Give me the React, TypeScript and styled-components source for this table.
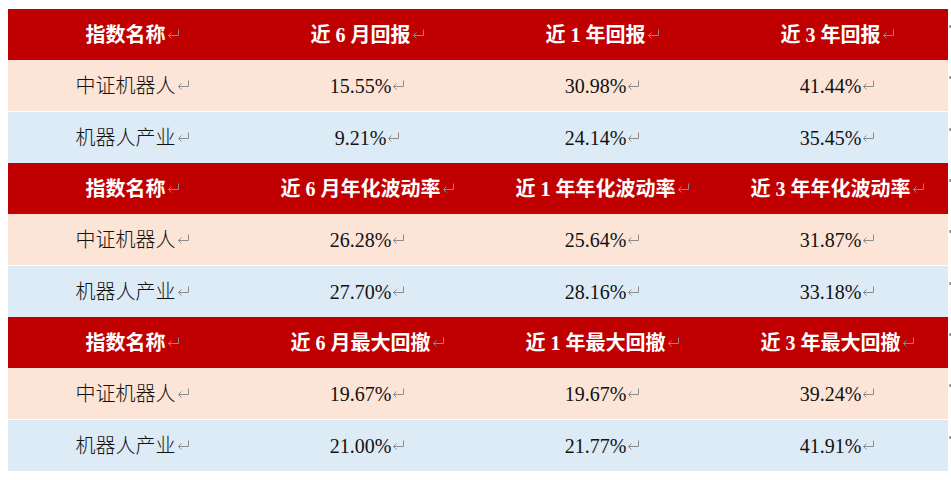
import React from "react";
import styled, { createGlobalStyle } from "styled-components";

const Global = createGlobalStyle`
  html, body { margin: 0; padding: 0; background: #ffffff; }
  body { font-family: "Liberation Serif", "Noto Sans CJK SC", serif; }
`;

const Page = styled.div`
  padding: 9px 0 0 8px;
  width: 951px;
  height: 480px;
  box-sizing: border-box;
  overflow: hidden;
`;

const Table = styled.div`
  display: flex;
  flex-direction: column;
  width: 943px;
`;

type Kind = "head" | "pink" | "blue";

const bg: Record<Kind, string> = {
  head: "#c00000",
  pink: "#fce4d6",
  blue: "#ddebf7",
};

const Row = styled.div<{ $gap: boolean }>`
  display: flex;
  align-items: stretch;
  height: 51px;
  margin-top: ${(p) => (p.$gap ? "1px" : "0")};
`;

const Cell = styled.div<{ $kind: Kind }>`
  width: 235px;
  flex: none;
  display: flex;
  align-items: center;
  justify-content: center;
  background: ${(p) => bg[p.$kind]};
  color: ${(p) => (p.$kind === "head" ? "#ffffff" : "#111111")};
  font-size: 20px;
  font-weight: ${(p) => (p.$kind === "head" ? 700 : 300)};
  white-space: nowrap;
  line-height: 1;
`;

const Text = styled.span`
  position: relative;
  display: inline-flex;
  align-items: center;
`;

const Mark = styled.svg`
  position: absolute;
  left: 100%;
  top: 50%;
  margin-top: -6px;
  margin-left: 1px;
`;

const EndMark = styled.div`
  width: 3px;
  flex: none;
  display: flex;
  align-items: flex-start;
  padding-top: 16px;
  margin-left: 1px;
`;

const Dot = styled.span`
  width: 3px;
  height: 3px;
  border-radius: 50%;
  background: #8a8a8a;
`;

const Return = () => (
  <Mark width="13" height="11" viewBox="0 0 13 11">
    <path d="M11.5 0.5 V6.5 H1.5" fill="none" stroke="#8c8c8c" strokeWidth="1" />
    <path d="M4.5 3.5 L1.5 6.5 L4.5 9.5" fill="none" stroke="#8c8c8c" strokeWidth="1" />
  </Mark>
);

const rows: { kind: Kind; cells: string[] }[] = [
  { kind: "head", cells: ["指数名称", "近 6 月回报", "近 1 年回报", "近 3 年回报"] },
  { kind: "pink", cells: ["中证机器人", "15.55%", "30.98%", "41.44%"] },
  { kind: "blue", cells: ["机器人产业", "9.21%", "24.14%", "35.45%"] },
  { kind: "head", cells: ["指数名称", "近 6 月年化波动率", "近 1 年年化波动率", "近 3 年年化波动率"] },
  { kind: "pink", cells: ["中证机器人", "26.28%", "25.64%", "31.87%"] },
  { kind: "blue", cells: ["机器人产业", "27.70%", "28.16%", "33.18%"] },
  { kind: "head", cells: ["指数名称", "近 6 月最大回撤", "近 1 年最大回撤", "近 3 年最大回撤"] },
  { kind: "pink", cells: ["中证机器人", "19.67%", "19.67%", "39.24%"] },
  { kind: "blue", cells: ["机器人产业", "21.00%", "21.77%", "41.91%"] },
];

export default function App() {
  return (
    <>
      <Global />
      <Page>
        <Table>
          {rows.map((r, i) => (
            <Row key={i} $gap={r.kind === "blue"}>
              {r.cells.map((c, j) => (
                <Cell key={j} $kind={r.kind}>
                  <Text>
                    {c}
                    <Return />
                  </Text>
                </Cell>
              ))}
              <EndMark>
                <Dot />
              </EndMark>
            </Row>
          ))}
        </Table>
      </Page>
    </>
  );
}
